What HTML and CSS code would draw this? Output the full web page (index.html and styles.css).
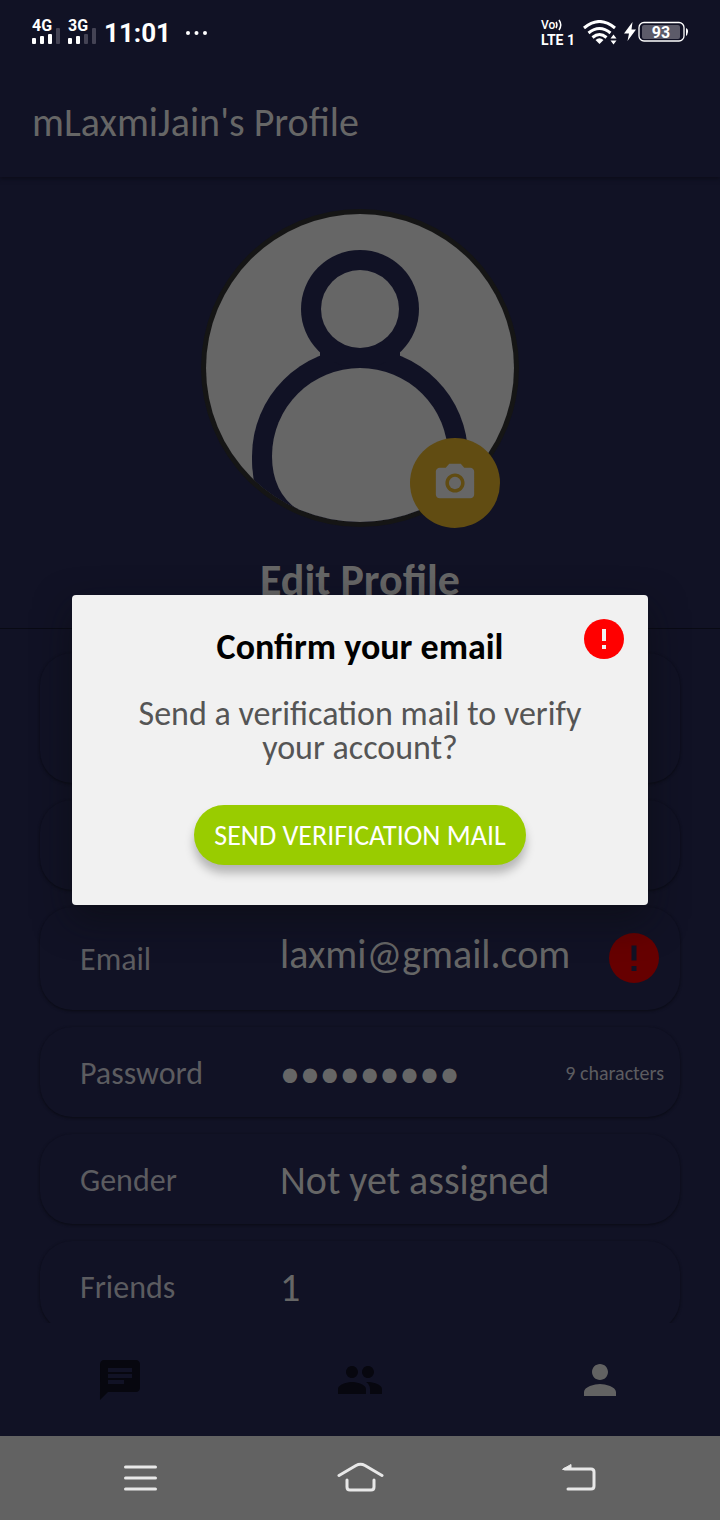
FILE: index.html
```
<!DOCTYPE html>
<html lang="en">
<head>
<meta charset="utf-8">
<meta name="viewport" content="width=device-width, initial-scale=1">
<title>mLaxmiJain's Profile</title>
<link rel="stylesheet" href="styles.css">
</head>
<body>
<header class="status">
  <svg class="signals" width="66" height="40" viewBox="0 -6 66 40" role="img" aria-label="Signal">
    <text class="net" x="0" y="12">4G</text>
    <text class="net" x="36" y="12">3G</text>
    <g fill="#fff">
      <rect x="0" y="19" width="4" height="6" rx="1"/><rect x="8" y="17" width="4" height="8" rx="1"/><rect x="16" y="15" width="4" height="10" rx="1"/>
      <rect x="36" y="19" width="4" height="6" rx="1"/><rect x="44" y="17" width="4" height="8" rx="1"/>
    </g>
    <g fill="#444354"><rect x="24" y="9" width="4" height="16" rx="1"/><rect x="52" y="15" width="4" height="10" rx="1"/><rect x="60" y="9" width="4" height="16" rx="1"/></g>
  </svg>
  <time class="clock">11:01</time>
  <svg class="more" width="24" height="6" viewBox="0 0 24 6" aria-hidden="true" fill="#fff"><circle cx="3" cy="3" r="2"/><circle cx="11.500" cy="3" r="2"/><circle cx="20" cy="3" r="2"/></svg>
  <div class="volte"><span class="vo">Vo<svg width="9" height="12" viewBox="0 0 9 12" fill="none" stroke="#fff" stroke-width="1.500" aria-hidden="true"><path d="M1 3q2 3 0 6M4 1q3.500 5 0 10"/></svg></span><span class="lte">LTE 1</span></div>
  <svg class="wifi" width="34" height="26" viewBox="0 0 34 26" aria-label="Wi-Fi" role="img">
    <g fill="none" stroke="#fff" stroke-width="3"><path d="M1 8Q16.500-5 32 8"/><path d="M5.500 13Q16.500 4 27.500 13"/><path d="M9.500 17.500Q16.500 11.500 23.500 17.500"/></g>
    <path fill="#fff" d="M12.500 20q4-3.500 8 0l-4 4zM30.500 14.500l3 4h-6zM30.500 24.500l-3-4h6z"/>
  </svg>
  <svg class="battery" width="64" height="24" viewBox="0 1 64 24" role="img" aria-label="Battery 93 percent">
    <path fill="#fff" d="M8.500 2 0 13.500h5L3.500 21 12 9.500H7.500z"/>
    <rect x="15" y="2.500" width="45" height="18.500" rx="5" fill="none" stroke="#fff" stroke-width="1.300"/>
    <rect x="18" y="5" width="38" height="14" rx="2" fill="#5c5b69"/>
    <path fill="#fff" d="M62 8q2.500 1 2 4t-2 4z"/>
    <text class="charge" x="37" y="18" text-anchor="middle">93</text>
  </svg>
</header>

<div class="app">
  <div class="appbar"><h1 class="title">mLaxmiJain's Profile</h1></div>
  <main class="content">
    <section class="hero">
      <div class="avatar">
        <svg class="portrait" viewBox="0 0 320 320" role="img" aria-label="Profile picture">
          <defs><clipPath id="disc"><circle cx="160" cy="160" r="154"/></clipPath></defs>
          <circle cx="160" cy="160" r="159" fill="#151515"/>
          <g clip-path="url(#disc)">
            <rect width="320" height="320" fill="#666"/>
            <circle cx="160" cy="248" r="108" fill="#111225"/>
            <path d="M52 248h216v72H70Q52 290 52 248z" fill="#111225"/>
            <circle cx="160" cy="101" r="59" fill="#111225"/>
            <rect x="120" y="140" width="80" height="14" fill="#111225"/>
            <circle cx="160" cy="101" r="39" fill="#666"/>
            <path d="M72 248a88 88 0 0 1 176 0v72H130L98 302Q72 284 72 248z" fill="#666"/>
          </g>
        </svg>
        <button class="camera" type="button" aria-label="Change picture">
          <svg width="46" height="46" viewBox="0 0 24 24" fill="#666"><circle cx="12" cy="12" r="3.200"/><path d="M9 2 7.170 4H4c-1.100 0-2 .9-2 2v12c0 1.100.9 2 2 2h16c1.100 0 2-.9 2-2V6c0-1.100-.9-2-2-2h-3.170L15 2H9zm3 15c-2.760 0-5-2.240-5-5s2.240-5 5-5 5 2.240 5 5-2.240 5-5 5z"/></svg>
        </button>
      </div>
      <h2 class="edit">Edit Profile</h2>
    </section>
    <dl class="rows">
      <div class="row tall"></div>
      <div class="row"></div>
      <div class="row medium"><dt>Email</dt><dd class="address">laxmi@gmail.com</dd><dd class="flag"><svg width="50" height="50" viewBox="0 0 50 50" role="img" aria-label="Not verified"><circle cx="25" cy="25" r="25" fill="#600"/><path d="M22.500 12.500h5v15h-5zM22.500 33h5v5h-5z" fill="#111225"/></svg></dd></div>
      <div class="row"><dt>Password</dt><dd>•••••••••</dd><dd class="note">9 characters</dd></div>
      <div class="row"><dt>Gender</dt><dd>Not yet assigned</dd></div>
      <div class="row"><dt>Friends</dt><dd>1</dd></div>
    </dl>
  </main>
  <nav class="tabs">
    <button type="button" aria-label="Chats"><svg width="48" height="48" viewBox="0 0 24 24" fill="#07070f"><path d="M20 2H4c-1.100 0-1.990.9-1.990 2L2 22l4-4h14c1.100 0 2-.9 2-2V4c0-1.100-.9-2-2-2zM6 9h12v2H6V9zm8 5H6v-2h8v2zm4-6H6V6h12v2z"/></svg></button>
    <button type="button" aria-label="Friends"><svg width="48" height="48" viewBox="0 0 24 24" fill="#07070f"><path d="M16 11c1.660 0 2.990-1.340 2.990-3S17.660 5 16 5s-3 1.340-3 3 1.340 3 3 3zm-8 0c1.660 0 2.990-1.340 2.990-3S9.660 5 8 5 5 6.340 5 8s1.340 3 3 3zm0 2c-2.330 0-7 1.170-7 3.500V19h14v-2.500c0-2.330-4.670-3.500-7-3.500zm8 0c-.29 0-.62.02-.97.05 1.160.84 1.970 1.970 1.970 3.450V19h6v-2.500c0-2.330-4.670-3.500-7-3.500z"/></svg></button>
    <button type="button" aria-label="Profile"><svg width="48" height="48" viewBox="0 0 24 24" fill="#626262"><path d="M12 12c2.210 0 4-1.790 4-4s-1.790-4-4-4-4 1.790-4 4 1.790 4 4 4zm0 2c-2.670 0-8 1.340-8 4v2h16v-2c0-2.660-5.330-4-8-4z"/></svg></button>
  </nav>
  <div class="overlay">
    <div class="dialog" role="dialog" aria-labelledby="confirm">
      <svg class="alert" width="40" height="40" viewBox="0 0 40 40" aria-hidden="true"><circle cx="20" cy="20" r="20" fill="#f00"/><path d="M18 10h4v12h-4zM18 26h4v4h-4z" fill="#f1f1f1"/></svg>
      <h2 class="heading" id="confirm">Confirm your email</h2>
      <p class="message">Send a verification mail to verify your account?</p>
      <button class="send" type="button">SEND VERIFICATION MAIL</button>
    </div>
  </div>
</div>

<footer class="system">
  <button type="button" aria-label="Recent apps"><svg width="48" height="36" viewBox="0 0 48 36"><path d="M9.500 7h30M9.500 18h30M9.500 29h30"/></svg></button>
  <button type="button" aria-label="Home"><svg width="48" height="36" viewBox="0 0 48 36"><path d="M3 15.500 20 5.500q4.500-2.500 9 0L46 15.500M11 20v7q0 3 3 3h21q3 0 3-3v-7"/></svg></button>
  <button type="button" aria-label="Back"><svg width="48" height="36" viewBox="0 0 48 36"><path d="M9 9h26q3 0 3 3v14q0 3-3 3H12"/><path class="tip" d="M7 9 15 4.500V9.500H7z"/></svg></button>
</footer>
</body>
</html>
```
FILE: styles.css
```
* { box-sizing: border-box; }
body {
  margin: 0;
  height: 100vh;
  display: flex;
  flex-direction: column;
  background: #111225;
  color: #666;
  font-family: Carlito, Calibri, Lato, sans-serif;
}
h1, h2, p, dl, dd { margin: 0; }
button { border: 0; padding: 0; background: none; font: inherit; }
svg { display: block; flex: none; }

.status {
  height: 64px;
  padding: 2px 32px 0;
  display: flex;
  align-items: center;
  color: #fff;
  font-family: Roboto, sans-serif;
}
.net { font: 700 16px Roboto, sans-serif; fill: #fff; }
.charge { font: 700 16px Roboto, sans-serif; fill: #fff; }
.clock { margin-left: 6px; font-size: 26px; font-weight: 700; }
.more { margin-left: 14px; }
.volte { margin-left: auto; display: flex; flex-direction: column; font-size: 14px; line-height: 16px; font-weight: 700; }
.vo { height: 14px; display: flex; align-items: center; line-height: 14px; font-size: 12px; font-weight: 500; }
.wifi { margin-left: 8px; }
.battery { margin-left: 7px; }

.app { position: relative; flex: 1; min-height: 0; display: flex; flex-direction: column; }
.appbar {
  height: 113px;
  flex: none;
  padding: 4px 32px 0;
  display: flex;
  align-items: center;
  box-shadow: 0 2px 4px #0c0d1a;
  clip-path: inset(0 0 -8px);
}
.title { font-size: 40px; line-height: 48px; font-weight: 400; }
.content { flex: 1; min-height: 0; overflow: hidden; margin-top: 4px; }
.hero {
  padding: 27px 0 24px;
  display: flex;
  flex-direction: column;
  align-items: center;
  border-bottom: 1px solid #090a14;
}
.avatar { position: relative; width: 320px; }
.camera {
  position: absolute;
  right: 20px;
  bottom: 0;
  width: 90px;
  height: 90px;
  border-radius: 50%;
  background: #614c12;
  display: grid;
  place-items: center;
}
.edit { margin-top: 28px; font-size: 44px; line-height: 48px; font-weight: 700; }

.rows { padding: 24px 40px; display: flex; flex-direction: column; gap: 17px; }
.row {
  height: 90px;
  flex: none;
  padding: 2px 16px 0 40px;
  display: flex;
  align-items: center;
  border-radius: 32px;
  box-shadow: 0 1px 3px #0a0b14;
  background: #111225;
  font-size: 40px;
}
.tall { height: 130px; }
.medium { height: 103px; }
.row dt { width: 200px; font-size: 32px; color: #5c5c60; }
.row .flag, .row .note { margin-left: auto; }
.row .flag { padding: 0 5px 4px 0; }
.row .note { font-size: 20px; color: #5c5c60; }
.row .address { padding-bottom: 10px; }

.tabs { height: 113px; flex: none; display: flex; align-items: center; }
.tabs button, .system button { flex: 1; display: grid; place-items: center; }

.overlay { position: absolute; inset: 0; display: grid; place-items: center; }
.dialog {
  position: relative;
  width: 80%;
  padding: 30px 56px 40px;
  display: flex;
  flex-direction: column;
  align-items: center;
  border-radius: 4px;
  background: #f1f1f1;
  box-shadow: 0 14px 36px rgba(12, 14, 18, .6);
  text-align: center;
}
.alert { position: absolute; top: 24px; right: 24px; }
.heading { font-size: 36px; line-height: 44px; color: #000; }
.message { margin-top: 28px; font-size: 34px; line-height: 34px; color: #555; }
.send {
  height: 60px;
  margin-top: 40px;
  padding: 0 20px;
  border-radius: 30px;
  background: #9c0;
  box-shadow: 0 8px 10px rgba(0, 0, 0, .25);
  color: #fff;
  font-size: 28px;
  white-space: nowrap;
}

.system { height: 84px; flex: none; padding: 0 30px; display: flex; background: #626262; }
.system svg { fill: none; stroke: #e8e8e8; stroke-width: 3; stroke-linecap: round; }
.system .tip { fill: #e8e8e8; stroke-width: 1; }
```
